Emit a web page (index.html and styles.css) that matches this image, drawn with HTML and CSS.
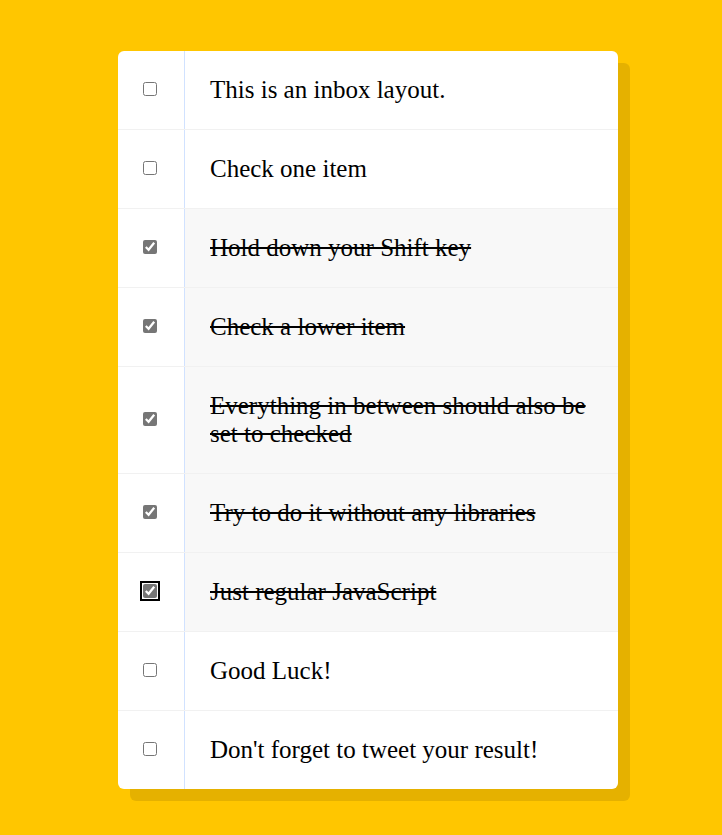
FILE: index.html
```html
<!DOCTYPE html>
<html>
<head>
<meta charset="utf-8">
<link rel="stylesheet" href="styles.css">
</head>
<body>
<div class="inbox">
  <div class="item"><input type="checkbox"><p>This is an inbox layout.</p></div>
  <div class="item"><input type="checkbox"><p>Check one item</p></div>
  <div class="item"><input type="checkbox" checked><p>Hold down your Shift key</p></div>
  <div class="item"><input type="checkbox" checked><p>Check a lower item</p></div>
  <div class="item"><input type="checkbox" checked><p>Everything in between should also be set to checked</p></div>
  <div class="item"><input type="checkbox" checked><p>Try to do it without any libraries</p></div>
  <div class="item"><input type="checkbox" class="focused" checked><p>Just regular JavaScript</p></div>
  <div class="item"><input type="checkbox"><p>Good Luck!</p></div>
  <div class="item"><input type="checkbox"><p>Don't forget to tweet your result!</p></div>
</div>
</body>
</html>
```
FILE: styles.css
```css
html {
  background: #ffc600;
}
body {
  margin: 0;
  padding: 51px 0 46px;
  font-family: "Liberation Serif", serif;
}
.inbox {
  width: 500px;
  margin: 0 0 0 118px;
  background: #fff;
  border-radius: 6px;
  box-shadow: 12px 12px 0 rgba(0, 0, 0, 0.1);
  overflow: hidden;
}
.item {
  display: flex;
  align-items: center;
  border-bottom: 1px solid #f1f1f1;
}
.item:last-child {
  border-bottom: 0;
}
.item input {
  margin: 0 27px 2px 25px;
  width: 14px;
  height: 14px;
  flex: none;
  accent-color: #767676;
}
.item input.focused {
  outline: 2px solid #000;
  outline-offset: 1px;
  border-radius: 2px;
}
.item p {
  margin: 0;
  padding: 25px;
  flex: 1;
  align-self: stretch;
  display: flex;
  align-items: center;
  font-size: 25px;
  line-height: 28px;
  color: #000;
  border-left: 1px solid #d1e2ff;
}
.item input:checked + p {
  background: #f8f8f8;
  text-decoration: line-through;
}
```
